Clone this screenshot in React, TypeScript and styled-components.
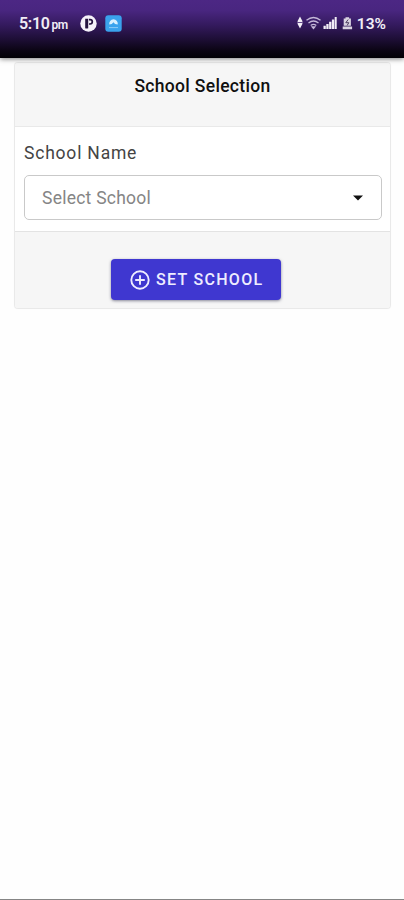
import React from "react";
import styled, { createGlobalStyle } from "styled-components";

const GlobalStyle = createGlobalStyle`
  * { box-sizing: border-box; }
  body { margin: 0; background: #fefefe; font-family: Roboto, sans-serif; }
`;

const Screen = styled.div`
  height: 900px;
  display: flex;
  flex-direction: column;
  background: #fefefe;
  border-bottom: 1px solid #858585;
  overflow: hidden;
`;

const StatusBar = styled.header`
  flex: none;
  height: 58px;
  padding: 0 18px 12px 19px;
  display: flex;
  align-items: center;
  justify-content: space-between;
  color: #f1edf6;
  background: linear-gradient(#4c2784 0%, #492680 18%, #341a5e 43%, #1d0e35 68%, #0a0412 88%, #020105 100%);
  box-shadow: 0 1px 5px rgba(0, 0, 0, 0.5);
  z-index: 1;
`;

const StatusGroup = styled.div<{ $gap?: number }>`
  display: flex;
  align-items: center;
  gap: ${({ $gap = 0 }) => $gap}px;
  svg { display: block; flex: none; }
`;

const Clock = styled.span`
  width: 61px;
  font-size: 16px;
  line-height: 20px;
  font-weight: 600;
  letter-spacing: -0.3px;
  padding-top: 2px;
  white-space: nowrap;
  small { font-size: 12px; margin-left: 2px; letter-spacing: -0.5px; }
`;

const Battery = styled.span`
  font-size: 15.5px;
  font-weight: 600;
  line-height: 20px;
  padding-top: 1px;
`;

const Card = styled.main`
  margin: 4px 13px 0 14px;
  border: 1px solid #e9e9e9;
  border-radius: 4px;
  height: 247px;
  display: flex;
  flex-direction: column;
  background: #fff;
  overflow: hidden;
  box-shadow: 0 0 1px #eee;
`;

const CardHeader = styled.div`
  height: 64px;
  flex: none;
  padding-top: 13px;
  background: #f6f6f6;
  border-bottom: 1px solid #e9e9e9;
  text-align: center;
`;

const Title = styled.h1`
  margin: 0;
  font-size: 17.5px;
  line-height: 20px;
  font-weight: 500;
  letter-spacing: 0.32px;
  color: #101010;
`;

const CardBody = styled.div`
  height: 105px;
  flex: none;
  padding: 15px 8px 0 9px;
  border-bottom: 1px solid #e3e3e3;
`;

const Label = styled.label`
  display: block;
  font-size: 17.5px;
  line-height: 22px;
  letter-spacing: 0.8px;
  color: #444;
`;

const Select = styled.button`
  width: 100%;
  height: 45px;
  margin-top: 11px;
  padding: 0 18px 0 17px;
  display: flex;
  align-items: center;
  justify-content: space-between;
  border: 1px solid #c9c9c9;
  border-radius: 5px;
  background: #fff;
  color: #858585;
  font: 400 17.5px/22px Roboto, sans-serif;
  letter-spacing: 0.25px;
`;

const CardFooter = styled.div`
  flex: 1;
  display: flex;
  align-items: flex-start;
  padding: 27px 0 0 96px;
  background: #f6f6f6;
`;

const Submit = styled.button`
  width: 170px;
  height: 41px;
  padding: 0 0 0 19px;
  display: flex;
  align-items: center;
  gap: 6px;
  border: 0;
  border-radius: 4px;
  color: #eeecff;
  background: #3f37d0;
  box-shadow: 0 1px 3px rgba(25, 25, 60, 0.5);
  font: 500 16px/20px Roboto, sans-serif;
  letter-spacing: 1.3px;
  white-space: nowrap;
  svg { flex: none; }
`;

const ParkingIcon = () => (
  <svg width="17" height="17" viewBox="0 0 17 17">
    <circle cx="8.5" cy="8.5" r="8.2" fill="#f5f1fa" />
    <path d="M5.2 3.8h3v9.4c-1.3.6-2.3.5-3 0z" fill="#24123f" />
    <path d="M9 4.6h1.1a2.2 2.2 0 0 1 0 4.4H9" fill="none" stroke="#24123f" strokeWidth="1.7" />
  </svg>
);

const CloudAppIcon = () => (
  <svg width="17" height="17" viewBox="0 0 17 17">
    <rect x=".3" y=".3" width="16.4" height="16.4" rx="3" fill="#3aa2ed" />
    <path d="M4.3 9.5a4.3 4.3 0 1 1 8.4 0L10 9 8.5 7.2 6.8 9z" fill="#d9f0ff" />
    <path d="M4 12.6h9" stroke="#8dccf7" />
  </svg>
);

const SignalIcons = () => (
  <svg width="57" height="17" viewBox="0 0 57 17">
    <path d="M4 1.5 6.4 6v3L4 13.5 1.6 9V6z" fill="#f1edf6" />
    <path d="M1.5 7.5h5" stroke="#402070" strokeWidth=".8" />
    <g fill="none" stroke="#c4b8d8" strokeWidth="1.3">
      <path d="M10.5 5.3q7-5.6 14 0M12.5 8q5-4 10 0M14.7 10.5q2.8-2.2 5.6 0" />
      <path d="m16.3 12 1.2 1.4 1.2-1.4z" fill="#c4b8d8" />
    </g>
    <path
      d="M27.5 14v-3.2h2.3V14zM30.3 14V9h2.3v5zM33.1 14V6.8h2.3V14zM35.9 14V4.4h2.3V14zM38.7 14V2h2V14z"
      fill="#f1edf6"
    />
    <path d="M49.5 2.2h3.6v1.3h1.8v7.2h-7.2V3.5h1.8zM46.7 11.6h9.4v2.7h-9.4z" fill="#d9d3e0" />
    <path d="m52.2 4.5-2.4 3.2h3l-1.7 2.8" fill="none" stroke="#4b3c5e" />
  </svg>
);

const AddCircleIcon = () => (
  <svg width="20" height="20" viewBox="0 0 20 20" fill="none" stroke="currentColor" strokeWidth="1.9">
    <circle cx="10" cy="10" r="8.7" />
    <path d="M10 5.2v9.6M5.2 10h9.6" />
  </svg>
);

const Caret = () => (
  <svg width="10" height="6" viewBox="0 0 10 6">
    <path d="M0 .5h10L5 5.5z" fill="#111" />
  </svg>
);

export default function App() {
  return (
    <>
      <GlobalStyle />
      <Screen>
        <StatusBar>
          <StatusGroup>
            <Clock>5:10<small>pm</small></Clock>
            <StatusGroup $gap={8}>
              <ParkingIcon />
              <CloudAppIcon />
            </StatusGroup>
          </StatusGroup>
          <StatusGroup $gap={4}>
            <SignalIcons />
            <Battery>13%</Battery>
          </StatusGroup>
        </StatusBar>
        <Card>
          <CardHeader><Title>School Selection</Title></CardHeader>
          <CardBody>
            <Label htmlFor="school">School Name</Label>
            <Select id="school" type="button">Select School<Caret /></Select>
          </CardBody>
          <CardFooter>
            <Submit type="button"><AddCircleIcon />SET SCHOOL</Submit>
          </CardFooter>
        </Card>
      </Screen>
    </>
  );
}
